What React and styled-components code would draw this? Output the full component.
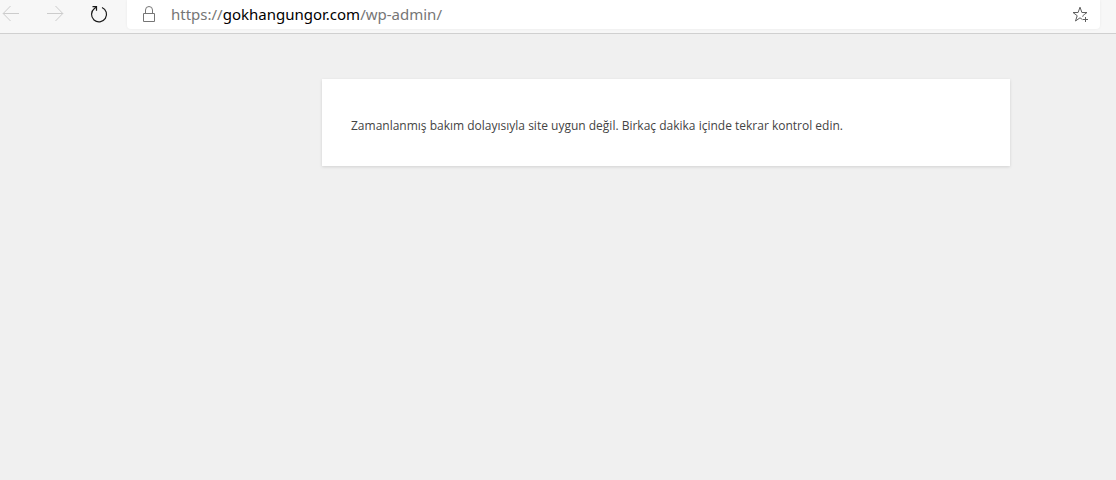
import React, { useState } from 'react';
import styled, { createGlobalStyle } from 'styled-components';

const pageConfig = {
    scheme: 'https://',
    host: 'gokhangungor.com',
    path: '/wp-admin/',
    message: 'Zamanlanmış bakım dolayısıyla site uygun değil. Birkaç dakika içinde tekrar kontrol edin.',
};

const fullUrl = pageConfig.scheme + pageConfig.host + pageConfig.path;


const BackIcon = () => (
    <svg width="18" height="18" viewBox="0 0 18 18" fill="none" stroke="currentColor" aria-hidden="true">
        <path d="M1.2 8.5H17M8.5 1L1.2 8.5L8.5 16" />
    </svg>
);

const ForwardIcon = () => (
    <svg width="18" height="18" viewBox="0 0 18 18" fill="none" stroke="currentColor" aria-hidden="true">
        <path d="M1 8.5H16.8M9.5 1L16.8 8.5L9.5 16" />
    </svg>
);

const ReloadIcon = () => (
    <svg width="18" height="18" viewBox="0 0 18 18" fill="none" stroke="currentColor" aria-hidden="true">
        <path d="M12 2.5A7.5 7.5 0 1 1 4.4 3.5L6.4 2" strokeWidth="1.2" />
        <path d="M2.5 1.6H6.5V5.8" strokeWidth="1.2" />
    </svg>
);

const LockIcon = () => (
    <svg width="14" height="17" viewBox="0 0 14 17" fill="none" stroke="currentColor" aria-hidden="true">
        <path d="M1.5 7.5H12.5V15.5H1.5Z" />
        <path d="M3.5 7.5V4A3.5 3.5 0 0 1 10.5 4V7.5" />
    </svg>
);

const StarIcon = () => (
    <svg width="18" height="17" viewBox="0 0 18 17" fill="none" stroke="currentColor" aria-hidden="true">
        <path d="M10.9 10.6L10.5 10L12.2 8.6L15 6.5H9.9L8 1.2L6.1 6.5H1L5.2 9.7L3.5 15L8 11.8L10.6 13.7" />
        <path d="M13.5 11V16M11 13.5H16" />
    </svg>
);


const AddressBar = () => {

    const [editing, setEditing] = useState(false);
    const [value, setValue] = useState(fullUrl);

    return (
        <AddressWrapper>
            <IconButton type="button" aria-label="Site bilgileri" $color="#767676">
                <LockIcon />
            </IconButton>
            {editing ? (
                <AddressInput
                    autoFocus
                    aria-label="Adres"
                    value={value}
                    onChange={(e) => setValue(e.target.value)}
                    onBlur={() => setEditing(false)}
                />
            ) : (
                <AddressText type="button" onClick={() => setEditing(true)}>
                    {pageConfig.scheme}<Host>{pageConfig.host}</Host>{pageConfig.path}
                </AddressText>
            )}
            <IconButton type="button" aria-label="Sık kullanılanlara ekle" $color="#5e5e5e">
                <StarIcon />
            </IconButton>
        </AddressWrapper>
    );
};


const App = () => {
    return (
        <>
            <GlobalStyle />
            <Toolbar>
                <Navigation aria-label="Gezinti">
                    <IconButton type="button" aria-label="Geri" $color="#cccccc" disabled>
                        <BackIcon />
                    </IconButton>
                    <IconButton type="button" aria-label="İleri" $color="#cccccc" disabled>
                        <ForwardIcon />
                    </IconButton>
                    <IconButton type="button" aria-label="Yenile" $color="#1a1a1a">
                        <ReloadIcon />
                    </IconButton>
                </Navigation>
                <AddressBar />
            </Toolbar>
            <Content>
                <Notice>
                    <Message>{pageConfig.message}</Message>
                </Notice>
            </Content>
        </>
    );
};

export default App;


const GlobalStyle = createGlobalStyle`
    body {
        margin: 0;
        background: #f0f0f0;
        font-family: 'Open Sans', 'Noto Sans', sans-serif;
    }
`;

const Toolbar = styled.header`
    display: flex;
    align-items: flex-start;
    height: 33px;
    padding-right: 16px;
    background: #f7f7f7;
    border-bottom: 1px solid #d0d0d0;
`;

const Navigation = styled.nav`
    display: flex;
    gap: 26px;
    padding: 5px 19px 0 2px;
`;

const IconButton = styled.button`
    display: flex;
    align-items: center;
    justify-content: center;
    flex-shrink: 0;
    padding: 0;
    border: none;
    background: none;
    color: ${({ $color }) => $color};
`;

const AddressWrapper = styled.div`
    flex: 1;
    min-width: 0;
    display: flex;
    align-items: center;
    gap: 15px;
    height: 29px;
    padding: 0 10px 0 15px;
    box-sizing: border-box;
    background: #ffffff;
    border-radius: 0 0 4px 4px;
    box-shadow: 0 0 3px rgba(0, 0, 0, 0.06);
`;

const AddressText = styled.button`
    flex: 1;
    min-width: 0;
    padding: 0;
    border: none;
    background: none;
    overflow: hidden;
    white-space: nowrap;
    text-align: left;
    font-family: 'Noto Sans', sans-serif;
    font-size: 15px;
    line-height: 27px;
    color: #767676;
    cursor: text;
`;

const AddressInput = styled.input`
    flex: 1;
    min-width: 0;
    padding: 0;
    border: none;
    outline: none;
    font-family: 'Noto Sans', sans-serif;
    font-size: 15px;
    line-height: 27px;
    color: #000000;
`;

const Host = styled.span`
    color: #000000;
`;

const Content = styled.main`
    padding: 45px 106px 32px 322px;

    @media screen and (max-width: 991px) {
        padding: 45px 24px 32px;
    }
`;

const Notice = styled.section`
    padding: 37px 29px 30px;
    background: #ffffff;
    box-shadow: 0 1px 3px rgba(0, 0, 0, 0.13);
`;

const Message = styled.p`
    margin: 0;
    font-size: 12px;
    line-height: 20px;
    color: #444444;
`;
